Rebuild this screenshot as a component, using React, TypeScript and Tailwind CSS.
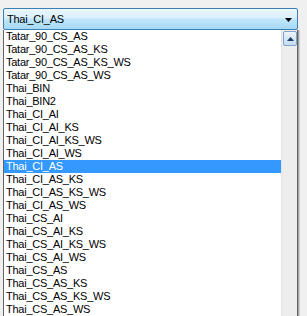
import React from "react";

const items = [
  "Tatar_90_CS_AS",
  "Tatar_90_CS_AS_KS",
  "Tatar_90_CS_AS_KS_WS",
  "Tatar_90_CS_AS_WS",
  "Thai_BIN",
  "Thai_BIN2",
  "Thai_CI_AI",
  "Thai_CI_AI_KS",
  "Thai_CI_AI_KS_WS",
  "Thai_CI_AI_WS",
  "Thai_CI_AS",
  "Thai_CI_AS_KS",
  "Thai_CI_AS_KS_WS",
  "Thai_CI_AS_WS",
  "Thai_CS_AI",
  "Thai_CS_AI_KS",
  "Thai_CS_AI_KS_WS",
  "Thai_CS_AI_WS",
  "Thai_CS_AS",
  "Thai_CS_AS_KS",
  "Thai_CS_AS_KS_WS",
  "Thai_CS_AS_WS",
];

export default function App() {
  return (
    <div
      className="w-[307px] h-[316px] bg-[#f0f0f0] overflow-hidden pt-[8px] pl-[3px] text-[11px] tracking-[-0.25px] text-black"
      style={{ fontFamily: '"Liberation Sans", Arial, sans-serif' }}
    >
      {/* Combobox */}
      <div className="w-[295px] h-[22px] rounded-[2px] border border-[#3c7fb1] flex items-center pl-[3px] pr-[5px] bg-[linear-gradient(to_bottom,#eaf6fd_0%,#d9f0fc_45%,#bee6fd_50%,#a7d9f5_100%)]">
        <span className="flex-1 leading-[13px]">Thai_CI_AS</span>
        <svg width="7" height="4" viewBox="0 0 7 4" className="mt-[1px]">
          <polygon points="0,0 7,0 3.5,4" fill="#000" />
        </svg>
      </div>
      {/* Dropdown list */}
      <div className="w-[295px] h-[300px] flex border-l border-r border-[#646464] bg-white shadow-[1px_0_0_#a0a0a0,2px_0_0_#d0d0d0]">
        <div className="flex-1 flex flex-col">
          {items.map((it) => {
            const sel = it === "Thai_CI_AS";
            return (
              <div
                key={it}
                className={
                  "h-[13px] leading-[13px] pl-[2px] whitespace-nowrap " +
                  (sel ? "bg-[#3399ff] text-white" : "")
                }
              >
                {it}
              </div>
            );
          })}
        </div>
        {/* Scrollbar */}
        <div className="w-[16px] bg-[#ededed] border-l border-[#e2e2e2] pt-[1px] pl-[1px]">
          <div className="w-[14px] h-[15px] rounded-[2px] border border-[#7ea4cc] bg-[linear-gradient(to_bottom,#eef5fc_0%,#d6e8f8_50%,#c2dcf4_100%)] flex items-center justify-center">
            <svg width="7" height="4" viewBox="0 0 7 4">
              <polygon points="0,4 7,4 3.5,0" fill="#1c3a5c" />
            </svg>
          </div>
        </div>
      </div>
    </div>
  );
}
